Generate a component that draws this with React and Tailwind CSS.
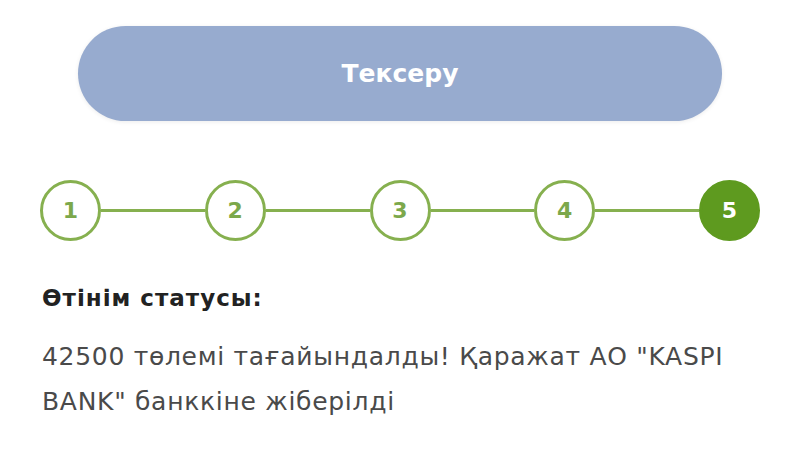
const steps = [1, 2, 3, 4, 5];

const Stepper = ({ current }) => (
  <div className="flex items-center px-[40px] w-full">
    {steps.map((n, i) => (
      <div key={n} className={`flex items-center ${i < steps.length - 1 ? "flex-1" : ""}`}>
        <div
          className={`w-[61px] h-[61px] shrink-0 rounded-full flex items-center justify-center text-[22px] font-bold border-[3px] ${
            n === current
              ? "bg-[#5e9a1f] border-[#5e9a1f] text-white"
              : "bg-white border-[#86b04f] text-[#7ca84b]"
          }`}
        >
          {n}
        </div>
        {i < steps.length - 1 && <div className="flex-1 h-[3px] bg-[#86b04f]" />}
      </div>
    ))}
  </div>
);

export default function App() {
  return (
    <div
      className="w-[800px] h-[450px] bg-white overflow-hidden flex flex-col"
      style={{ fontFamily: "'DejaVu Sans', 'Noto Sans', sans-serif" }}
    >
      {/* Check button */}
      <div className="pt-[26px] px-[78px]">
        <button className="w-full h-[95px] rounded-full bg-[#97abcf] text-white text-[25px] font-bold shadow-[0_1px_4px_rgba(0,0,0,0.08)]">
          Тексеру
        </button>
      </div>

      {/* Progress */}
      <div className="mt-[59px]">
        <Stepper current={5} />
      </div>

      {/* Application status */}
      <div className="px-[42px] mt-[42px]">
        <h3 className="text-[23px] font-bold tracking-[1px] text-[#222] leading-[30px]">Өтінім статусы:</h3>
        <p className="mt-[21px] text-[25px] tracking-[0.7px] text-[#4a4a4a] leading-[45px]">
          42500 төлемі тағайындалды! Қаражат АО "KASPI
          <br />
          BANK" банккіне жіберілді
        </p>
      </div>
    </div>
  );
}
